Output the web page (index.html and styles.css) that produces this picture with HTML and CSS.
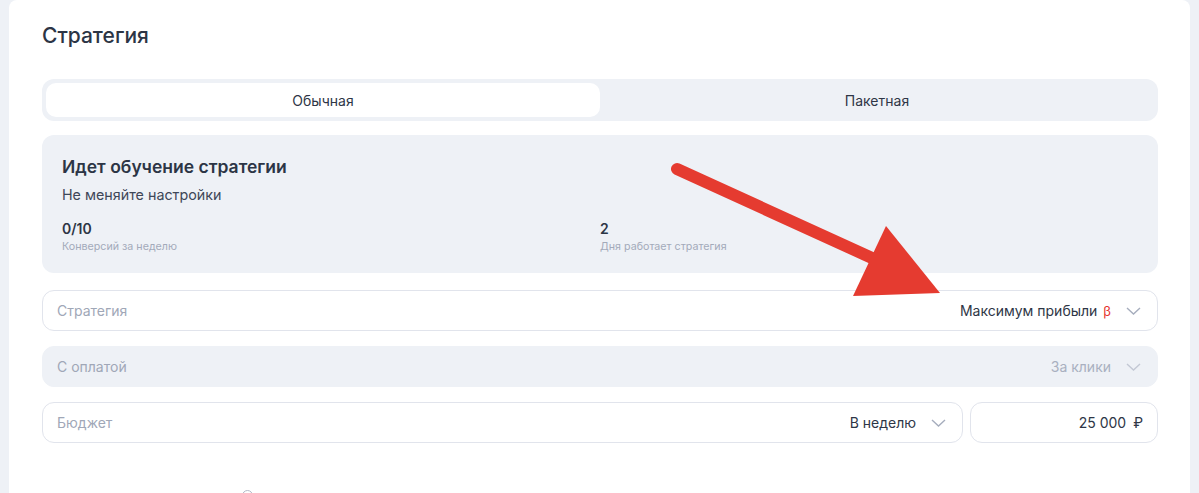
FILE: index.html
```html
<!DOCTYPE html>
<html lang="ru">
<head>
    <meta charset="UTF-8">
    <meta name="viewport" content="width=device-width, initial-scale=1.0">
    <title>Стратегия</title>
    <link rel="stylesheet" href="styles.css">
</head>
<body>
    <div class="card">
        <h1>Стратегия</h1>

        <div class="tabs">
            <div class="tab active">Обычная</div>
            <div class="tab">Пакетная</div>
        </div>

        <div class="learning">
            <h2>Идет обучение стратегии</h2>
            <p class="hint">Не меняйте настройки</p>
            <div class="stats">
                <div class="stat">
                    <div class="stat-value">0/10</div>
                    <div class="stat-label">Конверсий за неделю</div>
                </div>
                <div class="stat">
                    <div class="stat-value">2</div>
                    <div class="stat-label">Дня работает стратегия</div>
                </div>
            </div>
        </div>

        <div class="field">
            <span class="field-label">Стратегия</span>
            <span class="field-value">Максимум прибыли <span class="beta">β</span></span>
            <svg class="chevron" width="15" height="8" viewBox="0 0 15 8"><path d="M1 1l6.5 6 6.5-6"/></svg>
        </div>

        <div class="field disabled">
            <span class="field-label">С оплатой</span>
            <span class="field-value">За клики</span>
            <svg class="chevron" width="15" height="8" viewBox="0 0 15 8"><path d="M1 1l6.5 6 6.5-6"/></svg>
        </div>

        <div class="budget">
            <div class="field">
                <span class="field-label">Бюджет</span>
                <span class="field-value">В неделю</span>
                <svg class="chevron" width="15" height="8" viewBox="0 0 15 8"><path d="M1 1l6.5 6 6.5-6"/></svg>
            </div>
            <div class="field amount">
                <span class="field-value">25 000</span>
                <span class="currency">₽</span>
            </div>
        </div>

        <div class="next-row">
            <span class="dot"></span>
        </div>
    </div>

    <!-- red pointer drawn on top of the form -->
    <svg class="pointer" width="1199" height="493" viewBox="0 0 1199 493">
        <line x1="677" y1="169" x2="872" y2="258" stroke="#e53b30" stroke-width="12" stroke-linecap="round"/>
        <polygon points="886,226 853,296 940,293" fill="#e53b30"/>
    </svg>
</body>
</html>
```

FILE: styles.css
```css
html, body {
    overflow: hidden;
}

body {
    font-family: Inter, "Noto Sans", sans-serif;
    background-color: #eef1f6;
    margin: 0;
    padding: 0;
    color: #2e3646;
}

.card {
    margin-left: 9px;
    width: 1181px;
    min-height: 560px;
    box-sizing: border-box;
    padding: 22px 32px 0 33px;
    background-color: #fff;
    border-radius: 8px 8px 16px 16px;
}

h1 {
    margin: 0 0 29px;
    font-size: 21px;
    line-height: 28px;
    font-weight: 500;
    color: #2c3545;
}

.tabs {
    display: grid;
    grid-template-columns: 1fr 1fr;
    padding: 4px;
    height: 42px;
    box-sizing: border-box;
    background-color: #eef1f6;
    border-radius: 12px;
}

.tab {
    display: flex;
    align-items: center;
    justify-content: center;
    font-size: 14px;
    color: #2e3646;
    border-radius: 10px;
}

.tab.active {
    background-color: #fff;
}

.learning {
    margin-top: 14px;
    padding: 20px 20px 19px;
    background-color: #eef1f6;
    border-radius: 12px;
}

.learning h2 {
    margin: 0;
    font-size: 17.5px;
    line-height: 24px;
    font-weight: 600;
    color: #2c3545;
}

.hint {
    margin: 6px 0 0;
    font-size: 14.3px;
    line-height: 20px;
    color: #3e4758;
}

.stats {
    display: grid;
    grid-template-columns: 1fr 1fr;
    margin-top: 15px;
}

.stat-value {
    font-size: 14px;
    line-height: 18px;
    font-weight: 600;
    color: #2c3545;
}

.stat-label {
    margin-top: 2px;
    font-size: 10.7px;
    line-height: 14px;
    color: #a3aaba;
}

.field {
    display: flex;
    align-items: center;
    height: 41px;
    box-sizing: border-box;
    margin-top: 17px;
    padding: 0 16px 0 14px;
    border: 1px solid #e1e4ec;
    border-radius: 12px;
    font-size: 14px;
}

.field-label {
    flex: 1;
    color: #a0a7b7;
}

.field-value {
    color: #2e3646;
}

.beta {
    margin-left: 2px;
    color: #e5322d;
    font-size: 13px;
}

.chevron {
    margin-left: 15px;
    fill: none;
    stroke: #a6adbd;
    stroke-width: 1.4;
}

.field.disabled {
    margin-top: 15px;
    background-color: #eef1f6;
    border-color: #eef1f6;
}

.field.disabled .field-value {
    color: #a9b0c0;
}

.field.disabled .chevron {
    stroke: #c3c8d4;
}

.budget {
    display: grid;
    grid-template-columns: 1fr 188px;
    gap: 7px;
    margin-top: 15px;
}

.budget .field {
    margin-top: 0;
}

.amount {
    justify-content: flex-end;
    padding-right: 14px;
}

.currency {
    margin-left: 7px;
    color: #2e3646;
}

.next-row {
    margin-top: 47px;
    padding-left: 200px;
}

.dot {
    display: block;
    width: 9px;
    height: 9px;
    border: 1px solid #b4bac8;
    border-radius: 50%;
}

.pointer {
    position: absolute;
    top: 0;
    left: 0;
    pointer-events: none;
}
```
